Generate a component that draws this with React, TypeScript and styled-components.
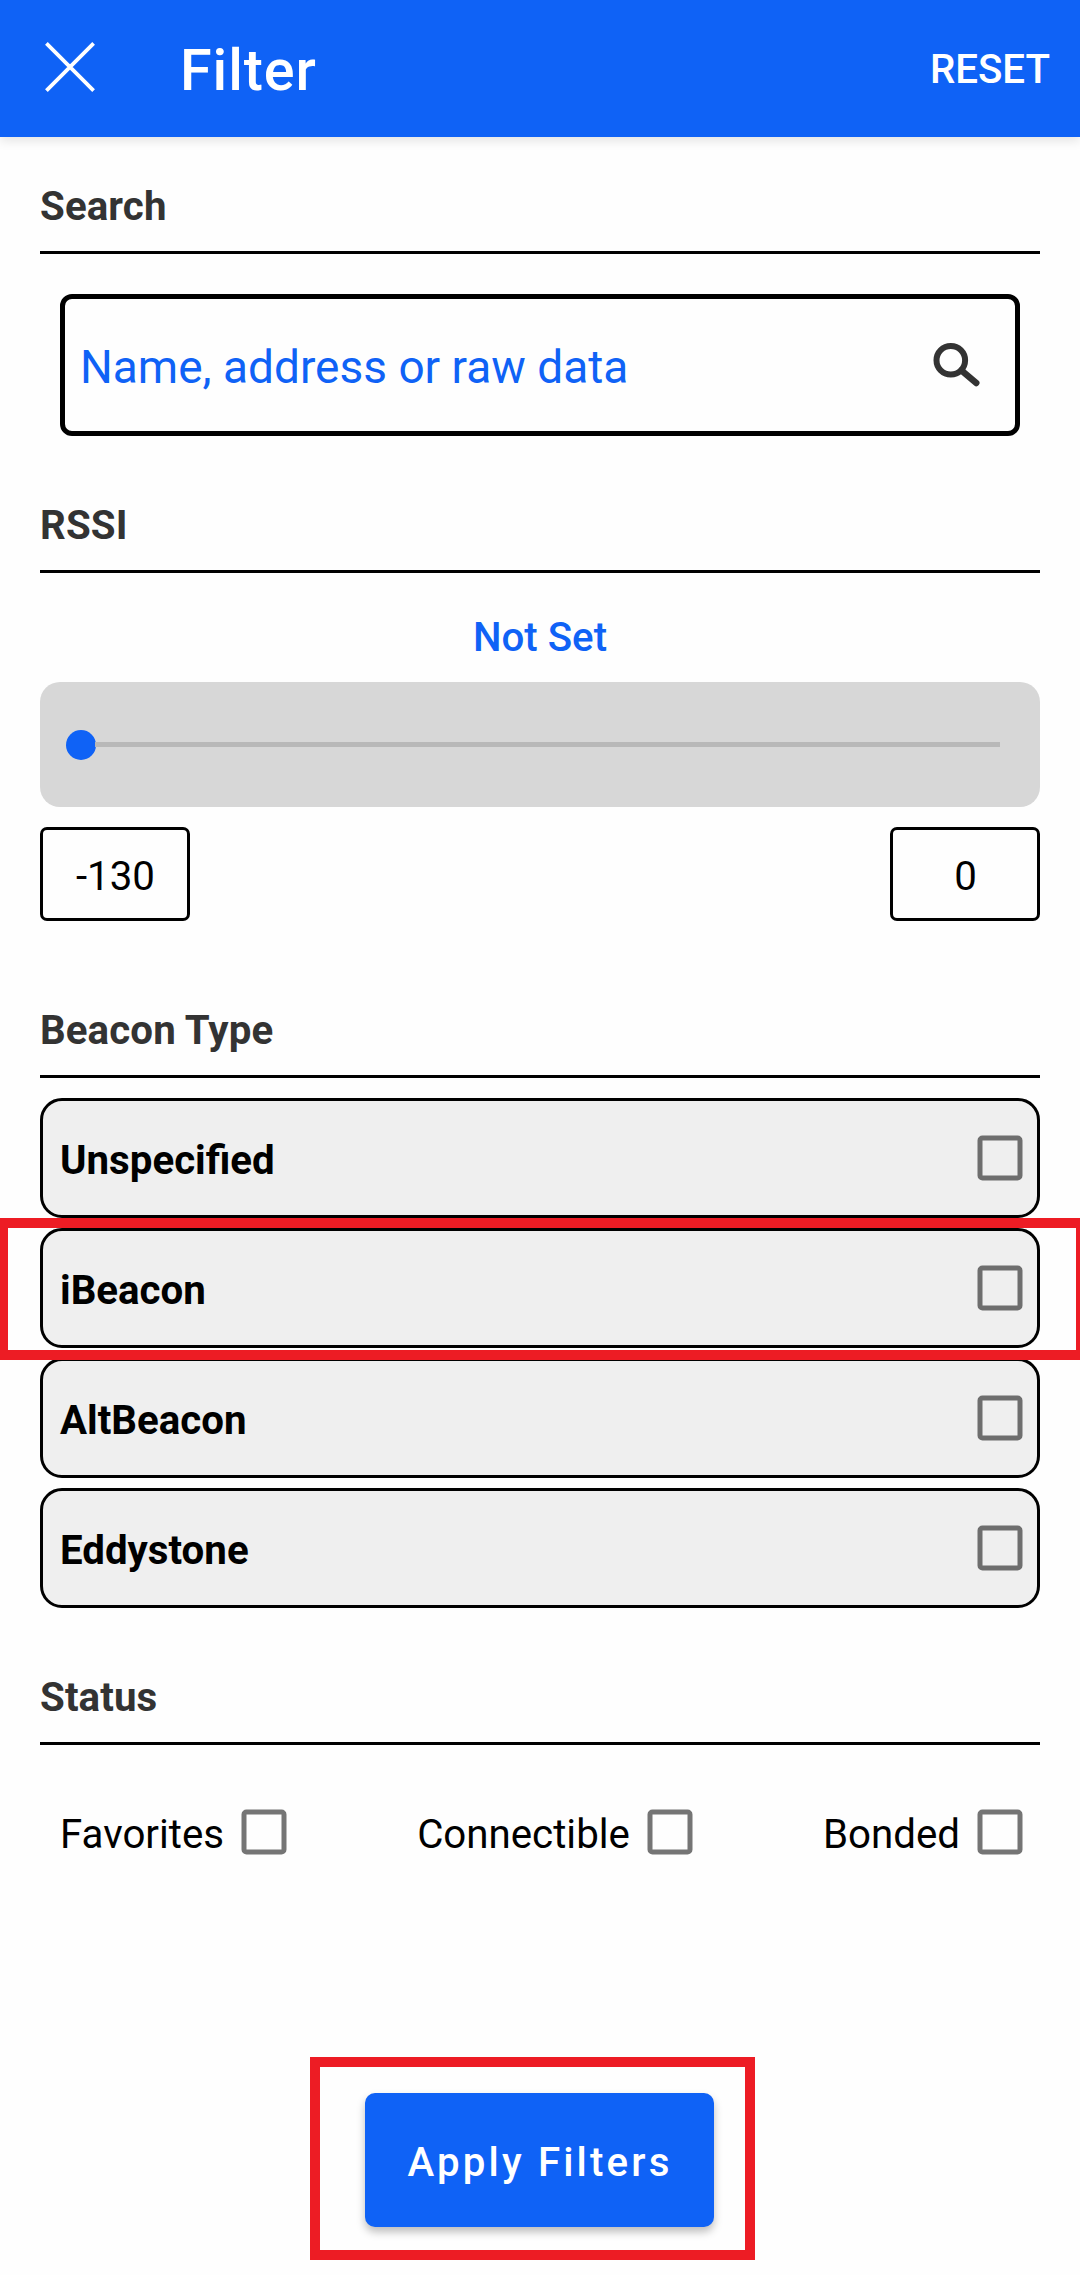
import React, { useState } from "react";
import styled, { createGlobalStyle } from "styled-components";

const BLUE = "#0f62f6";
const RED = "#ed1c24";

const GlobalStyle = createGlobalStyle`
  * { box-sizing: border-box; }
  body {
    margin: 0;
    background: #fefefe;
    font-family: Roboto, "Liberation Sans", sans-serif;
    font-size: 40.25px;
    line-height: 48px;
    color: #000;
  }
  button, input { font: inherit; }
`;

const Page = styled.div`
  display: flex;
  flex-direction: column;
  width: 1080px;
  height: 2275px;
  overflow: hidden;
  background: #fefefe;
`;

const AppBar = styled.header`
  display: flex;
  align-items: center;
  flex: none;
  height: 137px;
  padding: 0 30px 0 44px;
  background: ${BLUE};
  color: #fff;
  box-shadow: 0 4px 10px rgba(0, 0, 0, 0.1);
`;

const PlainButton = styled.button`
  display: flex;
  padding: 0;
  border: 0;
  background: none;
  color: inherit;
  cursor: pointer;
`;

const CloseButton = styled(PlainButton)`
  padding-bottom: 3px;
`;

const ResetButton = styled(PlainButton)`
  margin-left: auto;
  padding-top: 2px;
  font-weight: 500;
`;

const ScreenTitle = styled.h1`
  margin: 0 0 0 84px;
  padding-top: 4px;
  font-size: 57.5px;
  line-height: 68px;
  font-weight: 500;
  letter-spacing: 0.9px;
`;

const Content = styled.main`
  display: flex;
  flex-direction: column;
  padding: 0 40px;
`;

const SectionTitle = styled.h2<{ $space: number }>`
  margin: ${(p) => p.$space}px 0 0;
  padding-bottom: 20px;
  border-bottom: 3px solid #000;
  color: #333;
  font-size: 40.25px;
  line-height: 48px;
  font-weight: 700;
  letter-spacing: 0.1px;
`;

const SearchBox = styled.label`
  display: flex;
  align-items: center;
  height: 142px;
  margin: 40px 20px 0;
  padding: 0 34px 0 15px;
  border: 5px solid #000;
  border-radius: 12px;
`;

const SearchInput = styled.input`
  flex: 1;
  min-width: 0;
  height: 60px;
  margin-top: 4px;
  padding: 0;
  border: 0;
  outline: 0;
  background: none;
  font-size: 46px;
  line-height: 60px;
  &::placeholder { color: ${BLUE}; opacity: 1; }
`;

const RssiValue = styled.div`
  margin-top: 41px;
  text-align: center;
  color: ${BLUE};
  font-weight: 500;
`;

const SliderPanel = styled.div`
  display: flex;
  align-items: center;
  height: 125px;
  margin-top: 20px;
  padding: 0 40px 0 25.5px;
  border-radius: 20px;
  background: #d7d7d7;
`;

const Thumb = styled.div`
  width: 30px;
  height: 30px;
  border-radius: 50%;
  background: ${BLUE};
`;

const Track = styled.div`
  flex: 1;
  height: 5px;
  margin-left: -1px;
  background: #b8b8b8;
`;

const Limits = styled.div`
  display: flex;
  justify-content: space-between;
  margin-top: 20px;
`;

const Limit = styled.div`
  display: flex;
  align-items: center;
  justify-content: center;
  width: 150px;
  height: 94px;
  padding: 5px 0 0 1px;
  border: 3px solid #000;
  border-radius: 7px;
`;

const BeaconList = styled.div`
  display: flex;
  flex-direction: column;
  gap: 10px;
  margin-top: 20px;
`;

const BeaconRow = styled.div`
  position: relative;
  display: flex;
  align-items: center;
  justify-content: space-between;
  height: 120px;
  padding: 0 13px 0 17px;
  border: 3px solid #000;
  border-radius: 22px;
  background: #efefef;
  font-weight: 700;
`;

const BeaconName = styled.span`
  padding-top: 6px;
`;

const Highlight = styled.div<{ $inset: string }>`
  position: absolute;
  inset: ${(p) => p.$inset};
  z-index: 1;
  border: 10px solid ${RED};
  pointer-events: none;
`;

const StatusRow = styled.div`
  display: flex;
  justify-content: space-between;
  height: 48px;
  margin-top: 63px;
  padding: 0 16px 0 20px;
`;

const StatusItem = styled.div`
  display: flex;
  align-items: center;
  gap: 16px;
`;

const StatusName = styled.span`
  padding-top: 6px;
`;

const Actions = styled.div`
  display: flex;
  justify-content: center;
  margin-top: 237px;
`;

const ApplyWrap = styled.div`
  position: relative;
  margin-right: 1px;
`;

const ApplyButton = styled.button`
  width: 349px;
  height: 134px;
  padding: 6px 0 0 1px;
  border: 0;
  border-radius: 10px;
  background: ${BLUE};
  color: #fff;
  font-weight: 500;
  letter-spacing: 3.15px;
  box-shadow: 0 5px 8px rgba(0, 0, 0, 0.26);
`;

const CheckButton = styled(PlainButton)`
  flex: none;
`;

function Checkbox({ label, color }: { label: string; color: string }) {
  const [checked, setChecked] = useState(false);
  return (
    <CheckButton
      role="checkbox"
      aria-checked={checked}
      aria-label={label}
      onClick={() => setChecked(!checked)}
    >
      <svg width="48" height="48" viewBox="0 0 48 48" fill="none">
        <rect x="4" y="4" width="40" height="40" rx="2.5" stroke={color} strokeWidth="5" />
        {checked && <path d="M12 24l9 9 16-18" stroke={BLUE} strokeWidth="5" />}
      </svg>
    </CheckButton>
  );
}

const beaconTypes = [
  { name: "Unspecified" },
  { name: "iBeacon", highlighted: true },
  { name: "AltBeacon" },
  { name: "Eddystone" },
];

const statuses = ["Favorites", "Connectible", "Bonded"];

export default function App() {
  return (
    <Page>
      <GlobalStyle />
      <AppBar>
        <CloseButton aria-label="Close">
          <svg width="52" height="52" viewBox="0 0 52 52" fill="none">
            <path d="M2.4 2.4L49.6 49.6M49.6 2.4L2.4 49.6" stroke="#fff" strokeWidth="3.8" />
          </svg>
        </CloseButton>
        <ScreenTitle>Filter</ScreenTitle>
        <ResetButton>RESET</ResetButton>
      </AppBar>

      <Content>
        <SectionTitle $space={46}>Search</SectionTitle>
        <SearchBox>
          <SearchInput placeholder="Name, address or raw data" />
          <svg width="48" height="48" viewBox="0 0 48 48" fill="none">
            <circle cx="17.8" cy="19.3" r="14.3" stroke="#333" strokeWidth="6" />
            <path d="M28.5 29.5L43.3 42" stroke="#333" strokeWidth="6.4" strokeLinecap="round" />
          </svg>
        </SearchBox>

        <SectionTitle $space={66}>RSSI</SectionTitle>
        <RssiValue>Not Set</RssiValue>
        <SliderPanel>
          <Thumb />
          <Track />
        </SliderPanel>
        <Limits>
          <Limit>-130</Limit>
          <Limit>0</Limit>
        </Limits>

        <SectionTitle $space={86}>Beacon Type</SectionTitle>
        <BeaconList>
          {beaconTypes.map((b) => (
            <BeaconRow key={b.name}>
              <BeaconName>{b.name}</BeaconName>
              <Checkbox label={b.name} color="#6e6e6e" />
              {b.highlighted && <Highlight $inset="-13px -49px -15px -45px" />}
            </BeaconRow>
          ))}
        </BeaconList>

        <SectionTitle $space={66}>Status</SectionTitle>
        <StatusRow>
          {statuses.map((s) => (
            <StatusItem key={s}>
              <StatusName>{s}</StatusName>
              <Checkbox label={s} color="#757575" />
            </StatusItem>
          ))}
        </StatusRow>

        <Actions>
          <ApplyWrap>
            <ApplyButton>Apply Filters</ApplyButton>
            <Highlight $inset="-36px -41px -33px -55px" />
          </ApplyWrap>
        </Actions>
      </Content>
    </Page>
  );
}
